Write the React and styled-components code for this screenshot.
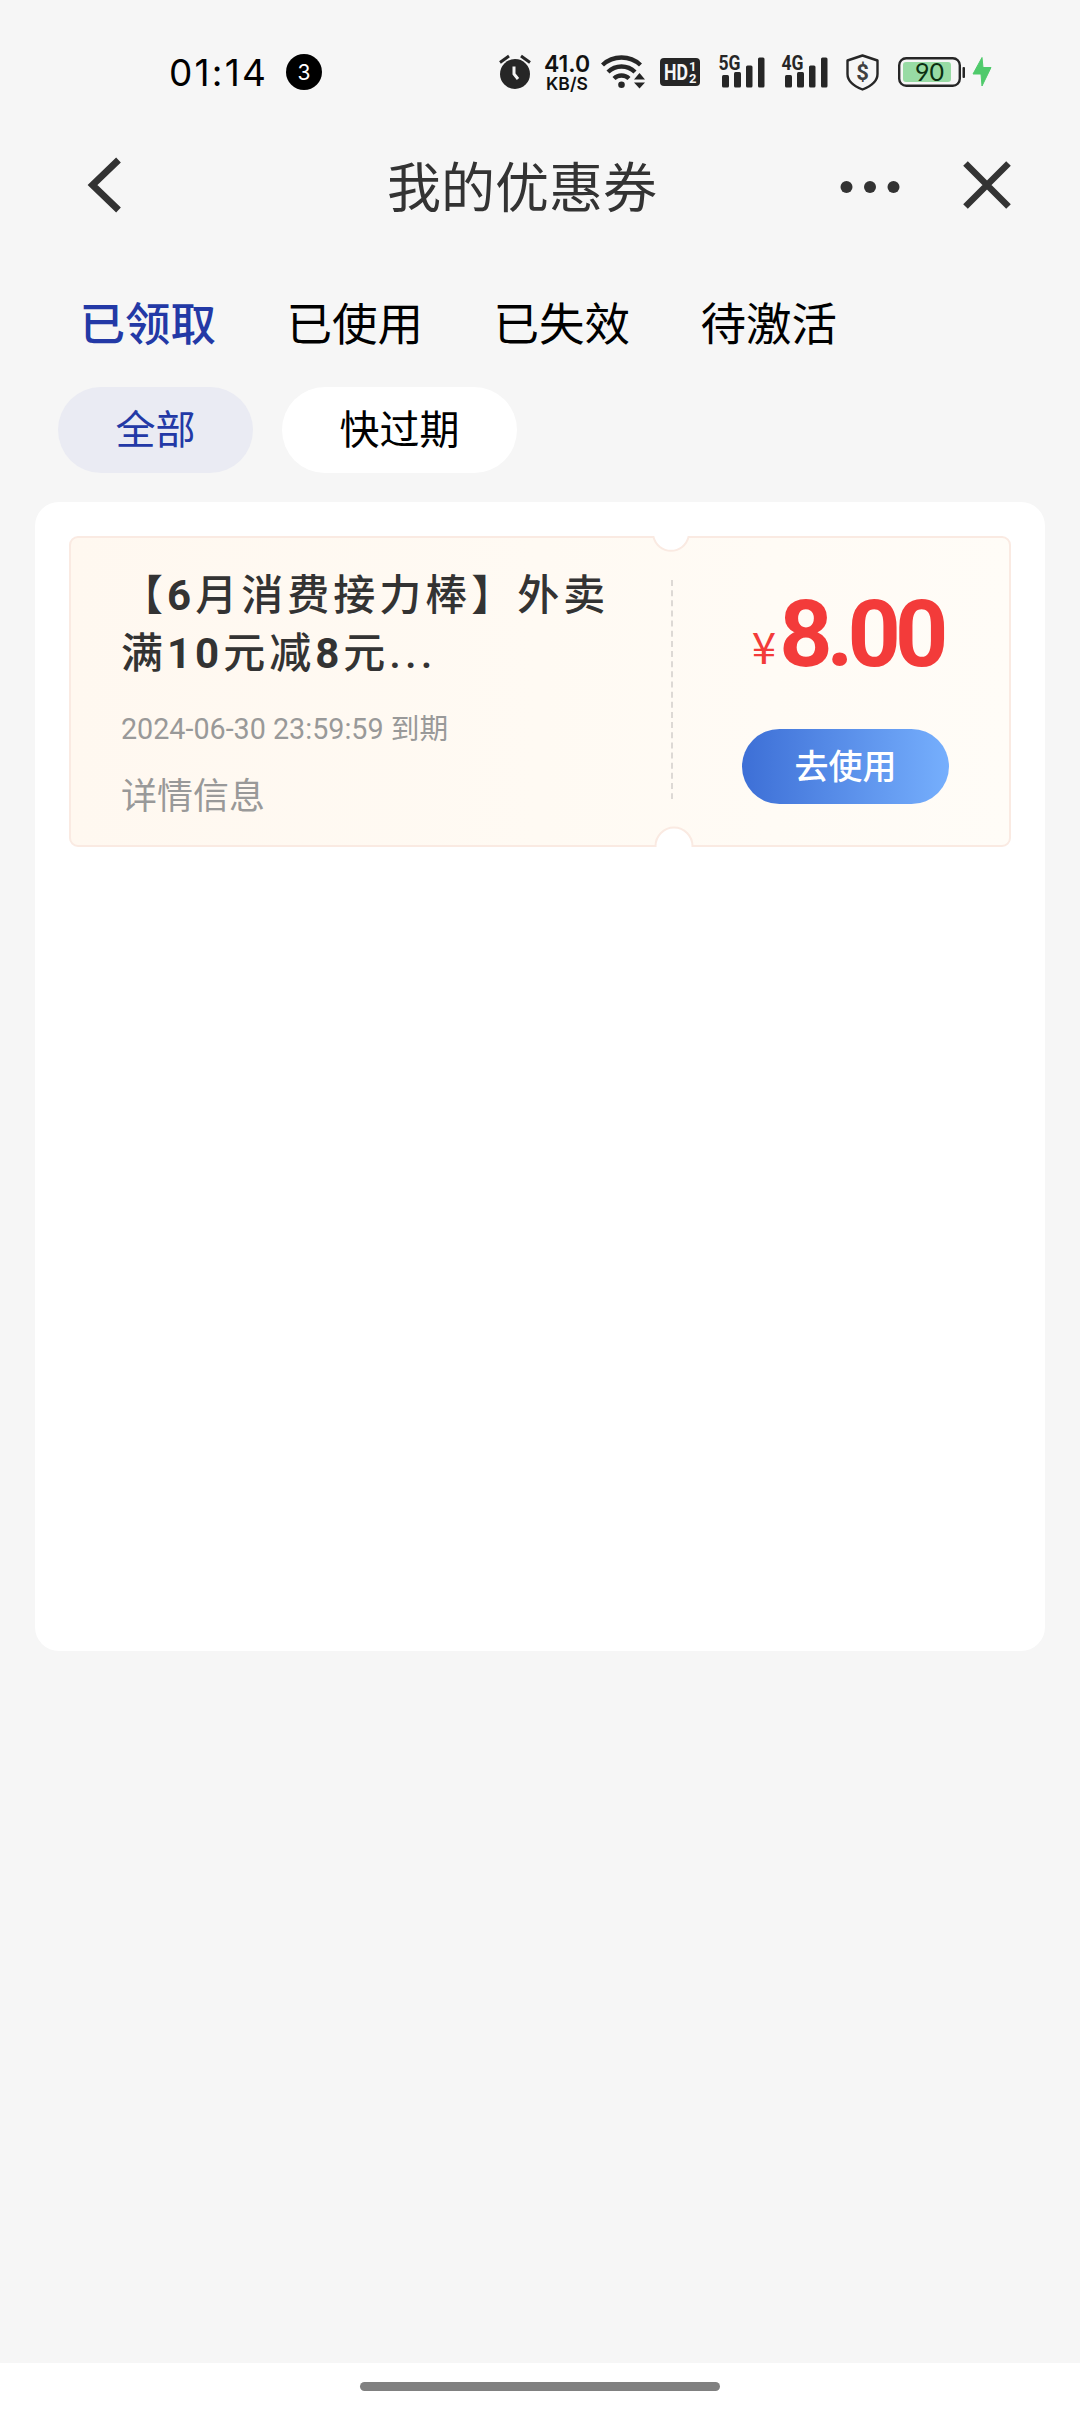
import { useState } from "react";
import styled, { createGlobalStyle } from "styled-components";

const GlobalStyle = createGlobalStyle`
  * {
    box-sizing: border-box;
  }
  body {
    margin: 0;
    background: #f6f6f6;
    font-family: Roboto, "Noto Sans CJK SC", sans-serif;
  }
  button {
    border: none;
    background: none;
    padding: 0;
    font-family: inherit;
    cursor: pointer;
  }
  svg {
    display: block;
    flex-shrink: 0;
  }
`;

const Screen = styled.div`
  display: flex;
  flex-direction: column;
  width: 1080px;
  height: 2412px;
  background: #f6f6f6;
  overflow: hidden;
`;

const StatusBar = styled.div`
  display: flex;
  align-items: center;
  height: 144px;
  padding: 0 88px 0 169px;
`;

const Clock = styled.span`
  width: 98px;
  padding-top: 1px;
  font-family: Inter, sans-serif;
  font-size: 37px;
  line-height: 40px;
  letter-spacing: 2.2px;
  white-space: nowrap;
  color: #000;
`;

const Badge = styled.span`
  display: flex;
  align-items: center;
  justify-content: center;
  width: 36px;
  height: 36px;
  margin-left: 19px;
  border-radius: 50%;
  background: #000;
  color: #fff;
  font-family: Inter, sans-serif;
  font-size: 21px;
`;

const StatusIcons = styled.div`
  display: flex;
  align-items: center;
  margin-left: auto;
`;

const StatusItem = styled.div`
  margin-left: ${(props) => props.$gap || 0}px;
`;

const Speed = styled.div`
  display: flex;
  flex-direction: column;
  align-items: center;
  width: 46px;
  padding-top: 1px;
  font-family: Inter, sans-serif;
  font-weight: 600;
  color: #111;
  white-space: nowrap;
`;

const SpeedValue = styled.span`
  font-size: 23px;
  line-height: 22px;
`;

const SpeedUnit = styled.span`
  font-size: 17.5px;
  line-height: 18px;
`;

const NavBar = styled.div`
  display: flex;
  align-items: center;
  justify-content: space-between;
  height: 82px;
  padding: 0 68px 0 86px;
`;

const Title = styled.h1`
  margin: 0 0 0 82px;
  padding-top: 10px;
  font-size: 54px;
  font-weight: 400;
  line-height: 72px;
  color: #333;
`;

const NavActions = styled.div`
  display: flex;
  align-items: center;
  gap: 62px;
`;

const Tabs = styled.div`
  display: flex;
  gap: 70.5px;
  height: 161px;
  padding: 67px 79.5px 0;
`;

const Tab = styled.button`
  height: 66px;
  font-size: 45.5px;
  font-weight: ${(props) => (props.$active ? 500 : 400)};
  line-height: 66px;
  color: ${(props) => (props.$active ? "#2339a6" : "#000")};
`;

const Filters = styled.div`
  display: flex;
  gap: 29px;
  padding: 0 58px;
`;

const Chip = styled.button`
  height: 86px;
  padding: 0 57.5px;
  border-radius: 43px;
  font-size: 40px;
  line-height: 85px;
  color: ${(props) => (props.$active ? "#2339a6" : "#000")};
  background: ${(props) => (props.$active ? "#eaebf3" : "#fff")};
`;

const Panel = styled.div`
  height: 1149px;
  margin: 29px 35px 0;
  padding: 34px 34px;
  border-radius: 24px;
  background: #fff;
`;

const Coupon = styled.div`
  position: relative;
  display: flex;
  height: 311px;
`;

const CouponShape = styled.svg`
  position: absolute;
  top: 0;
  left: 0;
`;

const CouponInfo = styled.div`
  position: relative;
  width: 603px;
  padding: 31px 0 0 52px;
`;

const CouponTitle = styled.div`
  width: 520px;
  font-size: 42px;
  font-weight: 500;
  line-height: 58px;
  letter-spacing: 4px;
  color: #333;
`;

const TitleNumber = styled.b`
  font-weight: 700;
`;

const Expiry = styled.div`
  margin-top: 26px;
  font-size: 28.7px;
  line-height: 40px;
  color: #999;
`;

const Detail = styled.div`
  margin-top: 22px;
  font-size: 36px;
  line-height: 52px;
  color: #999;
`;

const CouponSide = styled.div`
  position: relative;
  display: flex;
  flex-direction: column;
  align-items: center;
  flex: 1;
  padding: 49px 0 0 8px;
`;

const Price = styled.div`
  display: flex;
  align-items: baseline;
  height: 144px;
  margin-left: 3px;
  font-size: 93px;
  font-weight: 700;
  line-height: 100px;
  letter-spacing: -6px;
  color: #f33b3a;
`;

const Currency = styled.span`
  position: relative;
  top: -2px;
  margin-right: 3px;
  font-family: "Noto Sans CJK SC", sans-serif;
  font-size: 44px;
  font-weight: 400;
  line-height: 50px;
  letter-spacing: 0;
`;

const UseButton = styled.button`
  width: 207px;
  height: 75px;
  border-radius: 38px;
  font-size: 34px;
  font-weight: 500;
  line-height: 77px;
  color: #fff;
  background: linear-gradient(90deg, #3d6fd6, #76affd);
`;

const HomeBar = styled.div`
  display: flex;
  justify-content: center;
  height: 49px;
  margin-top: auto;
  padding-top: 19px;
  background: #fff;
`;

const HomeHandle = styled.div`
  width: 360px;
  height: 9px;
  border-radius: 5px;
  background: #808080;
`;

const AlarmIcon = () => (
  <svg width="32" height="36" viewBox="0 0 32 36">
    <circle cx="16" cy="20" r="15" fill="#262626" />
    <path d="M1 8.5 10 2M31 8.5 22 2" stroke="#262626" strokeWidth="3" />
    <path d="M15 12.5V20l4 5" fill="none" stroke="#f6f6f6" strokeWidth="3" />
  </svg>
);

const WifiIcon = () => (
  <svg width="44" height="36" viewBox="0 0 44 36">
    <g fill="none" stroke="#262626" strokeWidth="4.4">
      <path d="M1.5 11a28 28 0 0 1 38 0" />
      <path d="M7 18a19.5 19.5 0 0 1 27 0" />
      <path d="M13 24.5a11 11 0 0 1 15 0" />
    </g>
    <circle cx="20.5" cy="30.7" r="3.3" fill="#262626" />
    <path
      d="M38.5 19 44 25.5H33zM38.5 34.5 44 28.5H33z"
      fill="#262626"
      stroke="#f6f6f6"
      strokeWidth="3"
      paintOrder="stroke"
    />
  </svg>
);

const HdIcon = () => (
  <svg width="40" height="28" viewBox="0 0 40 28">
    <rect width="40" height="28" rx="4" fill="#262626" />
    <g fill="#f6f6f6" fontFamily="Roboto" fontWeight="700">
      <text x="4" y="22" fontSize="22.5" textLength="24" lengthAdjust="spacingAndGlyphs">HD</text>
      <text x="29" y="13" fontSize="13">1</text>
      <text x="29" y="25" fontSize="13">2</text>
    </g>
  </svg>
);

const SignalIcon = ({ label }) => (
  <svg width="47" height="42" viewBox="0 -4 47 42">
    <g fill="#262626">
      <rect x="4" y="20" width="7" height="12.5" rx="1.5" />
      <rect x="16" y="17" width="7" height="15.5" rx="1.5" />
      <rect x="28" y="10.5" width="6.5" height="22" rx="1.5" />
      <rect x="40" y="2.5" width="6.5" height="30" rx="1.5" />
    </g>
    <text
      x="0.5"
      y="15"
      fontSize="20"
      fontFamily="Roboto"
      fontWeight="700"
      fill="#262626"
      stroke="#f6f6f6"
      strokeWidth="2"
      paintOrder="stroke"
      textLength="22"
      lengthAdjust="spacingAndGlyphs"
    >
      {label}
    </text>
  </svg>
);

const ShieldIcon = () => (
  <svg width="33" height="37" viewBox="0 0 33 37">
    <path
      d="M16.5 1.5 31.5 6.5V20c0 7-6 12-15 15.5C7.5 32 1.5 27 1.5 20V6.5z"
      fill="none"
      stroke="#262626"
      strokeWidth="2.4"
      strokeLinejoin="round"
    />
    <text x="16.5" y="26" fontSize="22" fontFamily="Roboto" fontWeight="700" textAnchor="middle" fill="#404040">$</text>
  </svg>
);

const BatteryIcon = () => (
  <svg width="68" height="30" viewBox="0 0 68 30">
    <rect x="1.2" y="1.2" width="60.6" height="27.6" rx="7" fill="none" stroke="#262626" strokeWidth="2.4" />
    <rect x="5" y="5" width="48" height="20" rx="3" fill="#98dba4" />
    <rect x="64.5" y="10" width="2.5" height="11" rx="1" fill="#262626" />
    <text x="31.5" y="24" fontSize="25" fontFamily="Lato" textAnchor="middle" fill="#0c2f12">90</text>
  </svg>
);

const BoltIcon = () => (
  <svg width="20" height="32" viewBox="0 0 20 32">
    <path
      d="M10 1.5 1 18H9l1 12 9-18.5H11z"
      fill="#4fca6b"
      stroke="#4fca6b"
      strokeWidth="1"
      strokeLinejoin="round"
    />
  </svg>
);

const BackIcon = () => (
  <svg width="36" height="56" viewBox="0 0 36 56">
    <path d="M32.5 3 6.5 28l26 25" fill="none" stroke="#333" strokeWidth="6.8" />
  </svg>
);

const MoreIcon = () => (
  <svg width="60" height="18" viewBox="0 0 60 18">
    <circle cx="6.5" cy="11" r="6" fill="#333" />
    <circle cx="30" cy="11" r="6" fill="#333" />
    <circle cx="53.5" cy="11" r="6" fill="#333" />
  </svg>
);

const CloseIcon = () => (
  <svg width="50" height="50" viewBox="0 0 50 50">
    <path d="M3.5 3.5l43 43M46.5 3.5l-43 43" stroke="#333" strokeWidth="6.5" />
  </svg>
);

const CouponBackground = () => (
  <CouponShape width="942" height="311" viewBox="0 0 942 311">
    <defs>
      <linearGradient id="couponFill" x1="0" x2="1">
        <stop offset="0" stopColor="#fff8f0" />
        <stop offset="0.5" stopColor="#fffaf3" />
        <stop offset="1" stopColor="#fffcf7" />
      </linearGradient>
    </defs>
    <path
      d="M9 1H584.5A18 18 0 0 0 619.5 1H933a8 8 0 0 1 8 8V302a8 8 0 0 1-8 8H623.5A18.5 18.5 0 0 0 586.5 310H9a8 8 0 0 1-8-8V9a8 8 0 0 1 8-8z"
      fill="url(#couponFill)"
      stroke="#faeae2"
      strokeWidth="2"
    />
    <path d="M603 44V263" stroke="#ddd9d5" strokeWidth="2" strokeDasharray="6 4.15" />
  </CouponShape>
);

const tabs = ["已领取", "已使用", "已失效", "待激活"];
const filters = ["全部", "快过期"];

const App = () => {
  const [tab, setTab] = useState(0);
  const [filter, setFilter] = useState(0);

  return (
    <Screen>
      <GlobalStyle />
      <StatusBar>
        <Clock>01:14</Clock>
        <Badge>3</Badge>
        <StatusIcons>
          <StatusItem>
            <AlarmIcon />
          </StatusItem>
          <StatusItem $gap={13}>
            <Speed>
              <SpeedValue>41.0</SpeedValue>
              <SpeedUnit>KB/S</SpeedUnit>
            </Speed>
          </StatusItem>
          <StatusItem $gap={11}>
            <WifiIcon />
          </StatusItem>
          <StatusItem $gap={15}>
            <HdIcon />
          </StatusItem>
          <StatusItem $gap={18}>
            <SignalIcon label="5G" />
          </StatusItem>
          <StatusItem $gap={16}>
            <SignalIcon label="4G" />
          </StatusItem>
          <StatusItem $gap={18}>
            <ShieldIcon />
          </StatusItem>
          <StatusItem $gap={19}>
            <BatteryIcon />
          </StatusItem>
          <StatusItem $gap={6}>
            <BoltIcon />
          </StatusItem>
        </StatusIcons>
      </StatusBar>
      <NavBar>
        <BackIcon />
        <Title>我的优惠券</Title>
        <NavActions>
          <MoreIcon />
          <CloseIcon />
        </NavActions>
      </NavBar>
      <Tabs>
        {tabs.map((name, i) => (
          <Tab key={name} $active={i === tab} onClick={() => setTab(i)}>
            {name}
          </Tab>
        ))}
      </Tabs>
      <Filters>
        {filters.map((name, i) => (
          <Chip key={name} $active={i === filter} onClick={() => setFilter(i)}>
            {name}
          </Chip>
        ))}
      </Filters>
      <Panel>
        <Coupon>
          <CouponBackground />
          <CouponInfo>
            <CouponTitle>
              【<TitleNumber>6</TitleNumber>月消费接力棒】外卖满
              <TitleNumber>10</TitleNumber>元减<TitleNumber>8</TitleNumber>元...
            </CouponTitle>
            <Expiry>2024-06-30 23:59:59 到期</Expiry>
            <Detail>详情信息</Detail>
          </CouponInfo>
          <CouponSide>
            <Price>
              <Currency>¥</Currency>8.00
            </Price>
            <UseButton>去使用</UseButton>
          </CouponSide>
        </Coupon>
      </Panel>
      <HomeBar>
        <HomeHandle />
      </HomeBar>
    </Screen>
  );
};

export default App;
